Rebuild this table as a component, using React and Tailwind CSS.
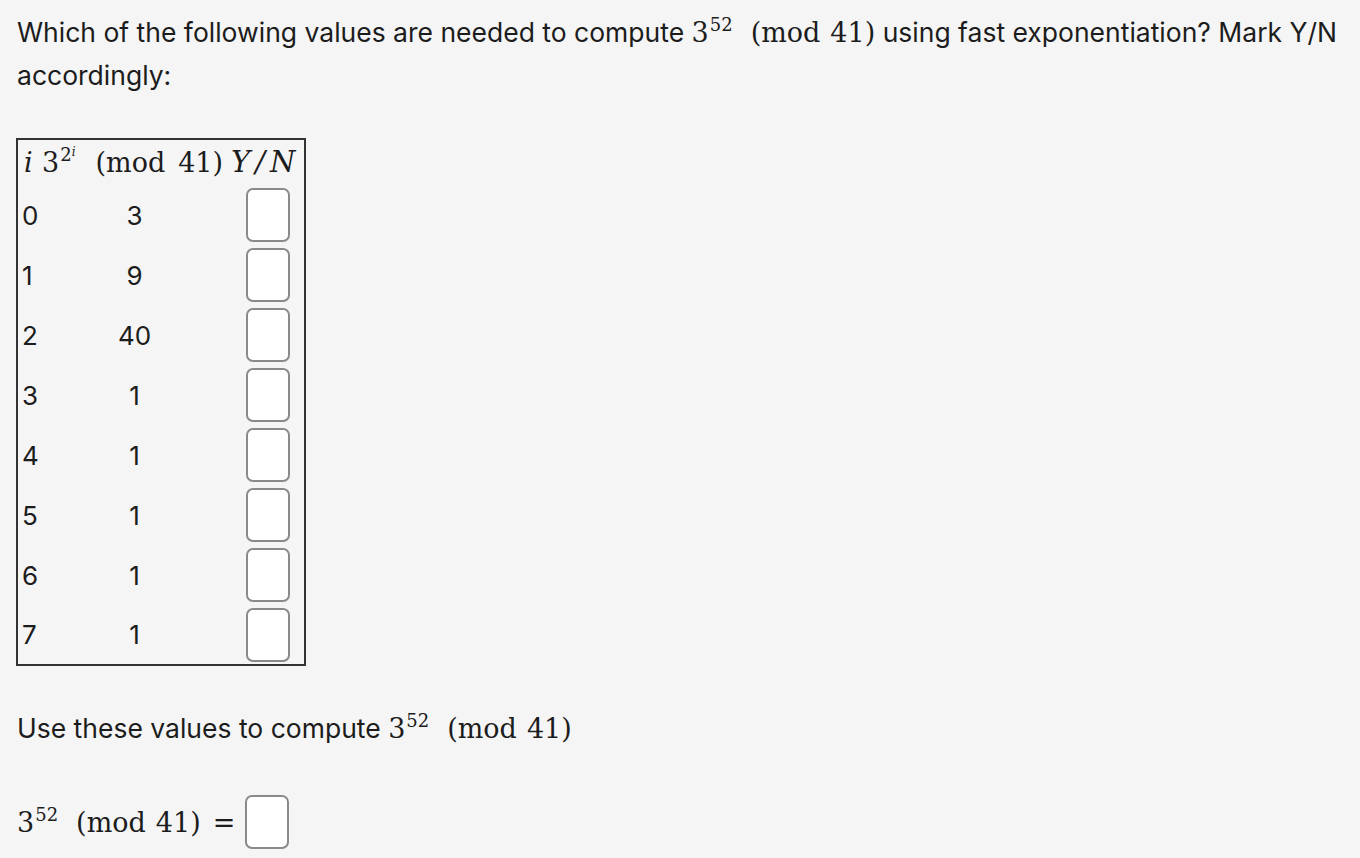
import React from "react";

const rows = [
  { i: 0, v: 3 },
  { i: 1, v: 9 },
  { i: 2, v: 40 },
  { i: 3, v: 1 },
  { i: 4, v: 1 },
  { i: 5, v: 1 },
  { i: 6, v: 1 },
  { i: 7, v: 1 },
];

const M = ({ children, className = "" }) => (
  <span
    className={`text-[27px] leading-none whitespace-nowrap ${className}`}
    style={{ fontFamily: '"DejaVu Serif", "Liberation Serif", serif' }}
  >
    {children}
  </span>
);

const Pow = () => (
  <>
    3<span className="text-[18px] relative -top-[11px] ml-[1px]">52</span>
  </>
);

const Mod = ({ gap = "ml-[18px]", inner = "ml-[10px]" }) => (
  <>
    <span className={gap}>(</span>mod<span className={inner}>41)</span>
  </>
);

const Box = ({ className = "" }) => (
  <input
    type="text"
    className={`w-[44px] h-[54px] shrink-0 rounded-[7px] border-2 border-[#8a8a8a] bg-white outline-none ${className}`}
  />
);

const App = () => {
  return (
    <div
      className="min-h-[858px] w-[1360px] bg-[#f5f5f5] text-[#1c1c1c] pl-[17px] pt-[11px]"
      style={{ fontFamily: 'Inter, "Noto Sans", sans-serif' }}
    >
      <p className="text-[26.5px] leading-[43px]">
        Which of the following values are needed to compute{" "}
        <M>
          <Pow />
          <Mod />
        </M>{" "}
        using fast exponentiation? Mark Y/N accordingly:
      </p>

      <table className="mt-[41px] -ml-[1px] w-[288px] table-fixed border-2 border-[#333] border-collapse text-[26px]">
        <colgroup>
          <col className="w-[21px]" />
          <col className="w-[193px]" />
          <col className="w-[74px]" />
        </colgroup>
        <thead>
          <tr className="h-[46px]">
            <th className="pl-[6px] text-left font-normal align-middle whitespace-nowrap overflow-visible">
              <M className="italic">i</M>
            </th>
            <th className="text-left font-normal pl-[4px] align-middle whitespace-nowrap overflow-visible">
              <M>
                3
                <span className="text-[18px] relative -top-[11px] ml-[1px]">
                  2
                  <i className="text-[12px] relative -top-[5px]">i</i>
                </span>
                <Mod gap="ml-[20px]" inner="ml-[13px]" />
              </M>
            </th>
            <th className="text-left font-normal pl-0 align-middle whitespace-nowrap overflow-visible">
              <M className="italic text-[29px]">
                Y<span className="mx-[5px]">/</span>N
              </M>
            </th>
          </tr>
        </thead>
        <tbody>
          {rows.map((r) => (
            <tr key={r.i} className="h-[60px]">
              <td className="pl-[4px] align-middle">{r.i}</td>
              <td className="text-center align-middle">{r.v}</td>
              <td className="text-center align-middle">
                <Box />
              </td>
            </tr>
          ))}
        </tbody>
      </table>

      <p className="mt-[41px] text-[26.5px] leading-[43px]">
        Use these values to compute{" "}
        <M>
          <Pow />
          <Mod />
        </M>
      </p>

      <div className="mt-[45px] flex items-center">
        <M>
          <Pow />
          <Mod />
          <span className="ml-[12px]">=</span>
        </M>
        <Box className="ml-[10px]" />
      </div>
    </div>
  );
};

export default App;
